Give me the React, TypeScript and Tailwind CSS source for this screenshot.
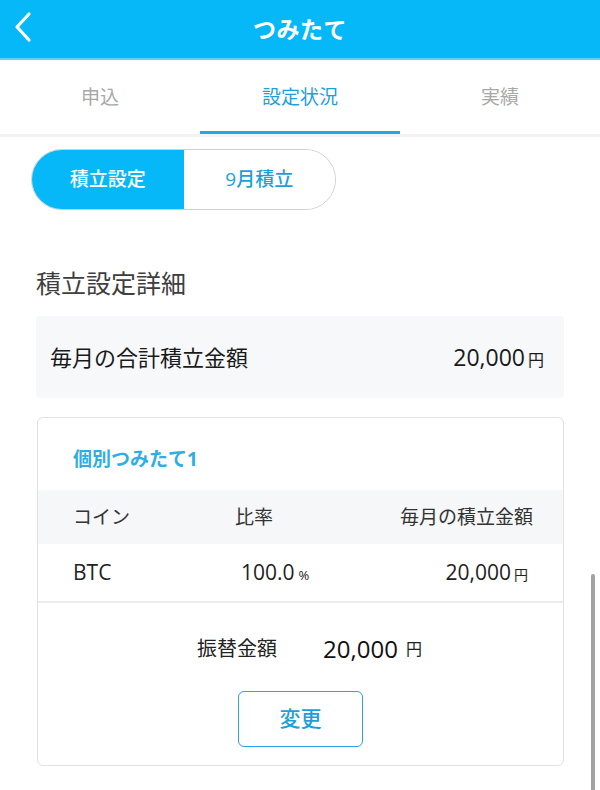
import React from "react";

const font = { fontFamily: '"Open Sans", "Noto Sans CJK JP", sans-serif' };

function Yen({ size = "text-[14px]", children }: { size?: string; children: React.ReactNode }) {
  return <span className={"ml-[3px] " + size}>{children}</span>;
}

export default function App() {
  const [tab, setTab] = React.useState(1);
  const [seg, setSeg] = React.useState(0);
  const tabs = ["申込", "設定状況", "実績"];

  return (
    <div className="relative w-[600px] h-[790px] overflow-hidden bg-white text-[#222]" style={font}>
      {/* header */}
      <div className="relative flex h-[60px] items-center justify-center bg-[#07b8f8] border-b-2 border-[#5cd0fb]">
        <button className="absolute left-[12px] top-[11px] text-white">
          <svg width="22" height="32" viewBox="0 0 22 32" fill="none">
            <path d="M17 3 L5 16 L17 29" stroke="white" strokeWidth="3.2" strokeLinecap="round" strokeLinejoin="round" />
          </svg>
        </button>
        <h1 className="text-[23px] font-bold tracking-[0.02em] text-white">つみたて</h1>
      </div>

      {/* tabs */}
      <div className="flex h-[77px] border-b-[3px] border-[#f3f3f3]">
        {tabs.map((t, i) => (
          <button
            key={t}
            onClick={() => setTab(i)}
            className={
              "flex-1 flex items-center justify-center text-[19px] border-b-[3px] pt-[3px] " +
              (tab === i ? "text-[#1d9fdc] border-[#2aa3e0]" : "text-[#a8a8a8] border-transparent")
            }
          >
            {t}
          </button>
        ))}
      </div>

      {/* segmented */}
      <div className="px-[31px] pt-[12px]">
        <div className="flex h-[61px] w-[305px] overflow-hidden rounded-full border border-[#cfcfcf]">
          {["積立設定", "9月積立"].map((s, i) => (
            <button
              key={s}
              onClick={() => setSeg(i)}
              className={
                "w-[152px] flex items-center justify-center text-[19px] font-medium " +
                (seg === i ? "bg-[#07b8f8] text-white" : "bg-white text-[#1d9fdc]")
              }
            >
              {s}
            </button>
          ))}
        </div>
      </div>

      <div className="px-[36px]">
        <h2 className="mt-[56px] text-[25px] text-[#3e3e3e] leading-[34px]">積立設定詳細</h2>

        <div className="mt-[16px] flex h-[82px] items-center justify-between rounded-[4px] bg-[#f6f8fa] pl-[14px] pr-[20px]">
          <span className="text-[22px] text-[#1a1a1a]">毎月の合計積立金額</span>
          <span className="text-[23px] text-[#1a1a1a]">
            20,000<Yen size="text-[16px]">円</Yen>
          </span>
        </div>

        {/* card */}
        <div className="mt-[19px] ml-[1px] rounded-[6px] border border-[#e2e2e2]">
          <div className="flex h-[72px] items-center pl-[35px] pt-[10px]">
            <span className="text-[19px] font-bold text-[#2eaee6]">個別つみたて1</span>
          </div>
          <div className="grid h-[54px] grid-cols-[162px_1fr_auto] items-center bg-[#f5f7f9] pl-[35px] pr-[30px] text-[19px] text-[#333]">
            <span>コイン</span>
            <span>比率</span>
            <span>毎月の積立金額</span>
          </div>
          <div className="grid h-[59px] grid-cols-[168px_1fr_auto] items-center border-b-2 border-[#ececec] pl-[35px] pr-[35px] text-[21px] text-[#222]">
            <span>BTC</span>
            <span>
              100.0<span className="ml-[4px] text-[13px]">%</span>
            </span>
            <span>
              20,000<Yen>円</Yen>
            </span>
          </div>
          <div className="flex flex-col items-center pb-[18px]">
            <div className="mt-[28px] flex items-center pl-[18px]">
              <span className="text-[20px] text-[#222]">振替金額</span>
              <span className="ml-[46px] text-[24px] text-[#111]">20,000</span>
              <span className="ml-[8px] text-[16px]">円</span>
            </div>
            <button className="mt-[24px] flex h-[56px] w-[125px] items-center justify-center rounded-[6px] border border-[#2aa3e0] text-[21px] font-medium text-[#1d9fdc]">
              変更
            </button>
          </div>
        </div>
      </div>

      {/* scroll indicator */}
      <div className="absolute left-[591px] top-[574px] h-[220px] w-[4px] rounded-full bg-[#a3a3a3]" />
    </div>
  );
}
